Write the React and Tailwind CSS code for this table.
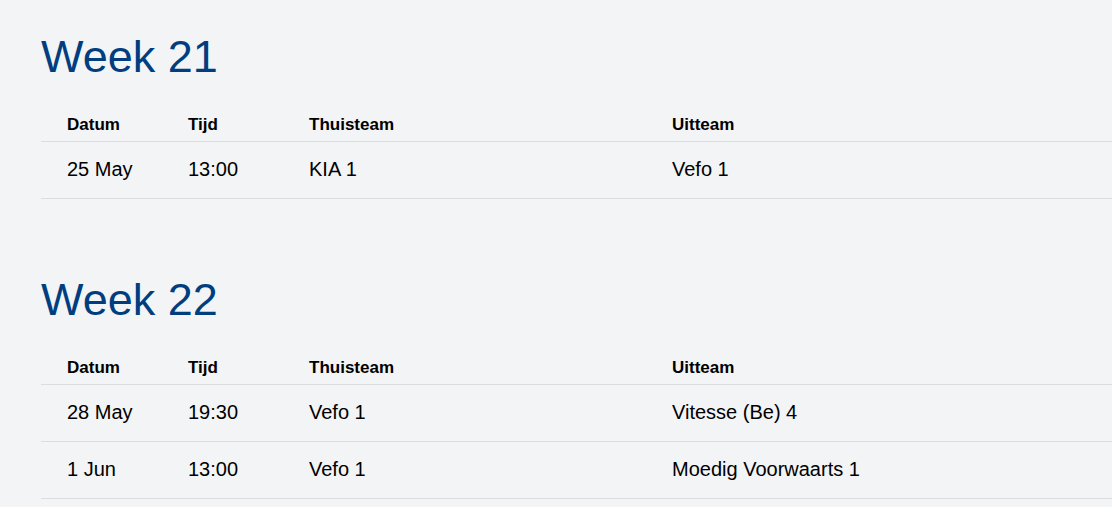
import React from "react";

const weeks = [
  {
    title: "Week 21",
    rows: [["25 May", "13:00", "KIA 1", "Vefo 1"]],
  },
  {
    title: "Week 22",
    rows: [
      ["28 May", "19:30", "Vefo 1", "Vitesse (Be) 4"],
      ["1 Jun", "13:00", "Vefo 1", "Moedig Voorwaarts 1"],
    ],
  },
];

const cols = "grid grid-cols-[121px_121px_363px_1fr]";

function Section({ title, rows }) {
  return (
    <section className="mb-[74px]">
      <h2 className="text-[45px] leading-[53px] text-[#003e80] font-normal">{title}</h2>
      <div className="mt-[24px]">
        <div className={`${cols} border-b border-[#dcdde0] pt-[6px] pb-[4px] text-[17px] leading-[24px] font-bold text-black`}>
          <div className="pl-[26px]">Datum</div>
          <div className="pl-[26px]">Tijd</div>
          <div className="pl-[26px]">Thuisteam</div>
          <div className="pl-[26px]">Uitteam</div>
        </div>
        {rows.map((r, i) => (
          <div
            key={i}
            className={`${cols} border-b border-[#dcdde0] h-[57px] items-center text-[20px] leading-[28px] text-black`}
          >
            {r.map((c, j) => (
              <div key={j} className="pl-[26px] pb-[2px]">{c}</div>
            ))}
          </div>
        ))}
      </div>
    </section>
  );
}

export default function App() {
  return (
    <div
      className="min-h-screen bg-[#f3f4f6] pl-[41px] pt-[30px]"
      style={{ fontFamily: '"Liberation Sans", Arial, sans-serif' }}
    >
      {weeks.map((w) => (
        <Section key={w.title} {...w} />
      ))}
    </div>
  );
}
